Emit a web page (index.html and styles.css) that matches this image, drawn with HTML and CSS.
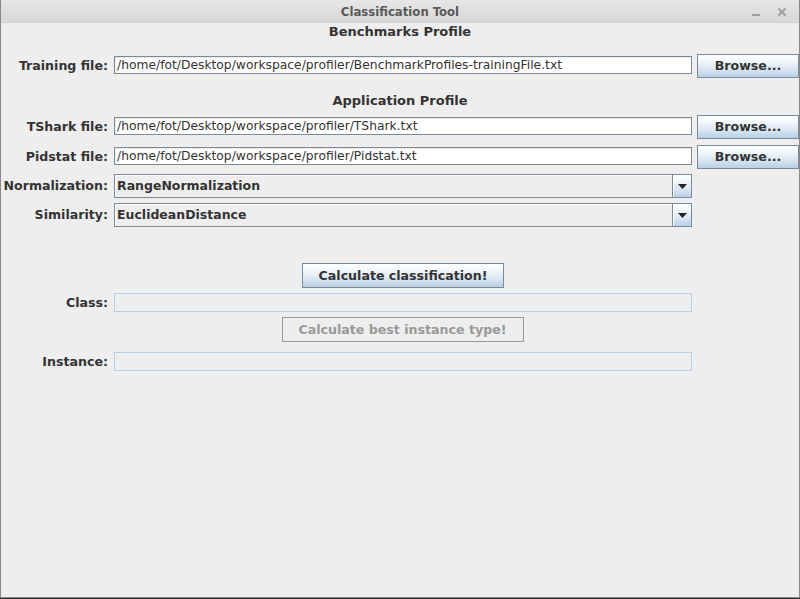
FILE: index.html
```html
<!DOCTYPE html>
<html>
<head>
<meta charset="utf-8">
<title>Classification Tool</title>
<link rel="stylesheet" href="styles.css">
</head>
<body>
<div class="window">
  <div class="titlebar">
    <span class="title">Classification Tool</span>
    <div class="controls">
      <span class="ctl-min"></span>
      <svg class="ctl-close" width="10" height="10" viewBox="0 0 10 10"><path d="M1.5 1.5 L8.5 8.5 M8.5 1.5 L1.5 8.5" stroke="#a0a0a0" stroke-width="2.2" stroke-linecap="butt"/></svg>
    </div>
  </div>
  <div class="content">
    <div class="heading h1">Benchmarks Profile</div>
    <div class="row file-row r-train">
      <label class="lbl">Training file:</label>
      <div class="field">/home/fot/Desktop/workspace/profiler/BenchmarkProfiles-trainingFile.txt</div>
      <button class="btn browse">Browse...</button>
    </div>
    <div class="heading h2">Application Profile</div>
    <div class="row file-row r-tshark">
      <label class="lbl">TShark file:</label>
      <div class="field">/home/fot/Desktop/workspace/profiler/TShark.txt</div>
      <button class="btn browse">Browse...</button>
    </div>
    <div class="row file-row r-pid">
      <label class="lbl">Pidstat file:</label>
      <div class="field">/home/fot/Desktop/workspace/profiler/Pidstat.txt</div>
      <button class="btn browse">Browse...</button>
    </div>
    <div class="row combo-row r-norm">
      <label class="lbl">Normalization:</label>
      <div class="combo"><span class="combo-val">RangeNormalization</span><span class="combo-arrow"><svg width="9" height="5" viewBox="0 0 9 5"><path d="M0 0 H9 L4.5 5 Z" fill="#222"/></svg></span></div>
    </div>
    <div class="row combo-row r-sim">
      <label class="lbl">Similarity:</label>
      <div class="combo"><span class="combo-val">EuclideanDistance</span><span class="combo-arrow"><svg width="9" height="5" viewBox="0 0 9 5"><path d="M0 0 H9 L4.5 5 Z" fill="#222"/></svg></span></div>
    </div>
    <div class="center-row r-calc">
      <button class="btn calc">Calculate classification!</button>
    </div>
    <div class="row out-row r-class">
      <label class="lbl">Class:</label>
      <div class="field disabled"></div>
    </div>
    <div class="center-row r-best">
      <button class="btn best" disabled>Calculate best instance type!</button>
    </div>
    <div class="row out-row r-inst">
      <label class="lbl">Instance:</label>
      <div class="field disabled"></div>
    </div>
  </div>
</div>
<div class="taskbar"></div>
</body>
</html>
```

FILE: styles.css
```css
html, body {
  margin: 0;
  padding: 0;
  background: #eeeeee;
}
body {
  width: 800px;
  height: 599px;
  overflow: hidden;
  font-family: "DejaVu Sans", "Liberation Sans", sans-serif;
  color: #333333;
}
.window {
  box-sizing: border-box;
  width: 800px;
  height: 598px;
  border-left: 1px solid #8a8a8a;
  border-right: 1px solid #8a8a8a;
  border-bottom: 1px solid #8a8a8a;
  background: #eeeeee;
  display: flex;
  flex-direction: column;
}
.taskbar {
  height: 1px;
  background: #2a2a2a;
}
.titlebar {
  height: 23px;
  flex: none;
  display: flex;
  align-items: center;
  justify-content: center;
  position: relative;
  background: linear-gradient(#e6e6e6, #d8d8d8);
  border-bottom: 1px solid #d0d0d0;
  box-sizing: border-box;
}
.title {
  font-family: "DejaVu Sans Condensed", "DejaVu Sans", sans-serif;
  font-weight: bold;
  font-size: 13px;
  color: #5a5a5a;
  margin-top: 1px;
}
.controls {
  position: absolute;
  right: 12px;
  top: 7px;
  display: flex;
  align-items: center;
  gap: 17px;
}
.ctl-min {
  width: 8px;
  height: 2px;
  margin-top: 5px;
  background: #a0a0a0;
}
.ctl-close {
  display: block;
}
.content {
  display: flex;
  flex-direction: column;
}
.heading {
  height: 17px;
  line-height: 17px;
  text-align: center;
  font-weight: bold;
  font-size: 13px;
  color: #333;
}
.h1 { margin-top: 0; }
.h2 { margin-top: 14px; }
.row {
  display: grid;
  grid-template-columns: 113px 583px 102px;
  align-items: center;
}
.lbl {
  text-align: right;
  padding-right: 6px;
  font-weight: bold;
  font-size: 12.6px;
  color: #333;
  white-space: nowrap;
  margin-top: -1px;
}
.file-row { height: 24px; }
.r-train { margin-top: 14px; }
.r-tshark { margin-top: 6px; }
.r-pid { margin-top: 6px; }
.field {
  box-sizing: border-box;
  width: 578px;
  height: 18px;
  background: #ffffff;
  border: 1px solid #7a8a99;
  box-shadow: inset 1px 1px 0 #eaeaea;
  font-size: 12.3px;
  line-height: 16px;
  padding-left: 2px;
  color: #333;
  white-space: nowrap;
  overflow: hidden;
}
.file-row .field {
  align-self: start;
  margin-top: 2px;
}
.btn {
  box-sizing: border-box;
  font-family: "DejaVu Sans", sans-serif;
  font-weight: bold;
  font-size: 12.6px;
  color: #333;
  border: 1px solid #7a8a99;
  background: linear-gradient(#ffffff 0%, #f4f8fc 25%, #dde8f3 60%, #b8cfe5 100%);
  padding: 0;
  margin: 0;
}
.browse {
  width: 102px;
  height: 24px;
  padding-bottom: 2px;
}
.combo-row { height: 24px; }
.r-norm { margin-top: 5px; }
.r-sim { margin-top: 5px; }
.combo {
  box-sizing: border-box;
  width: 578px;
  height: 24px;
  display: flex;
  border: 1px solid #7a8a99;
  background: #eeeeee;
}
.combo-val {
  flex: 1;
  box-shadow: inset 1px 1px 0 #ffffff;
  border-right: 1px solid #7a8a99;
  font-weight: bold;
  font-size: 12.5px;
  line-height: 21px;
  padding-left: 2px;
  color: #333;
}
.combo-arrow {
  width: 18px;
  display: flex;
  align-items: center;
  justify-content: center;
  background: linear-gradient(#ffffff 0%, #f0f5fa 30%, #dde8f3 60%, #b8cfe5 100%);
  box-shadow: inset 1px 1px 0 #ffffff;
}
.combo-arrow svg { display: block; }
.center-row {
  display: flex;
  justify-content: center;
}
.r-calc { margin-top: 36px; padding-left: 6px; }
.calc {
  width: 202px;
  height: 25px;
}
.r-class { margin-top: 5px; height: 19px; }
.out-row .field { height: 19px; }
.field.disabled {
  background: #eeeeee;
  border: 1px solid #b8cfe5;
  box-shadow: none;
}
.r-best { margin-top: 5px; padding-left: 5px; }
.best {
  width: 242px;
  height: 25px;
  background: #eeeeee;
  border: 1px solid #999999;
  color: #999999;
}
.r-inst { margin-top: 10px; height: 19px; }
```
